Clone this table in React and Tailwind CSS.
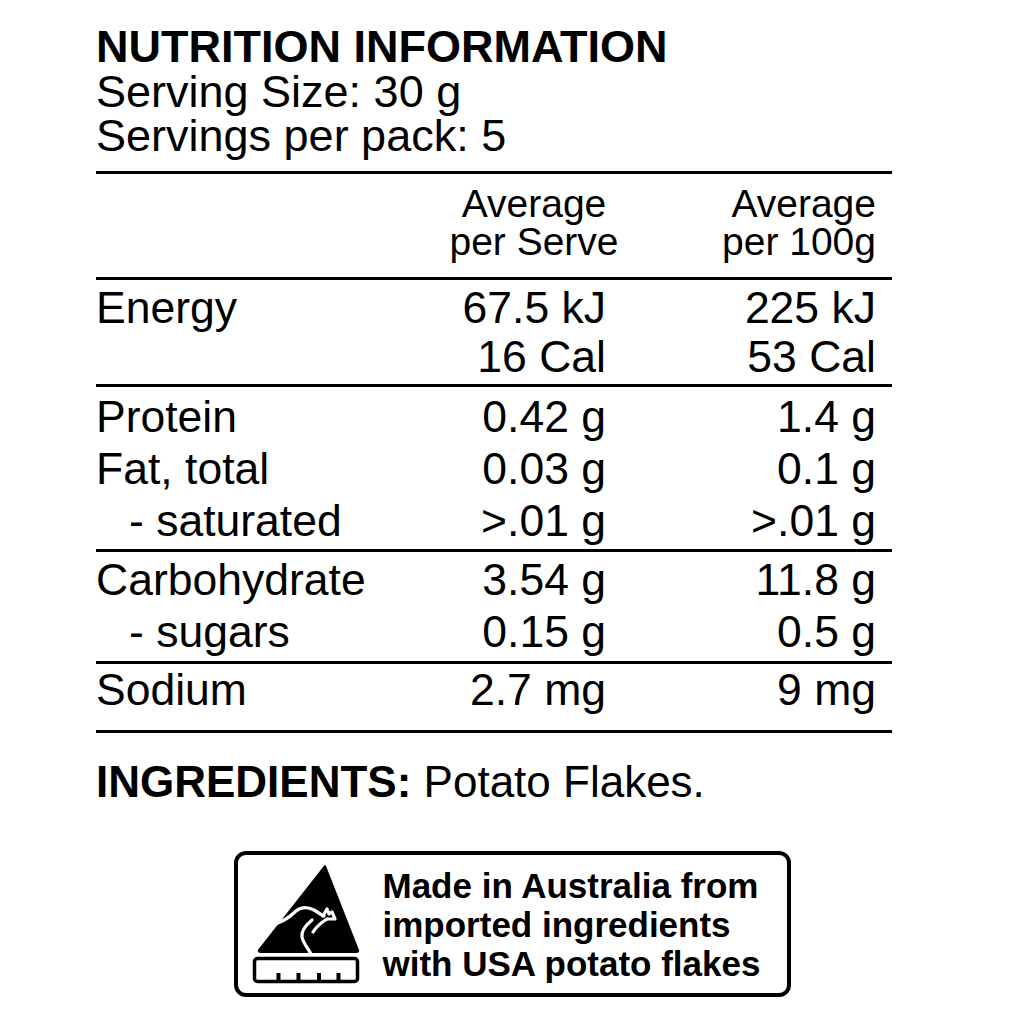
import React from "react";

const rows = [
  [
    { label: "Protein", serve: "0.42 g", per100: "1.4 g" },
    { label: "Fat, total", serve: "0.03 g", per100: "0.1 g" },
    { label: "- saturated", serve: ">.01 g", per100: ">.01 g", sub: true },
  ],
  [
    { label: "Carbohydrate", serve: "3.54 g", per100: "11.8 g" },
    { label: "- sugars", serve: "0.15 g", per100: "0.5 g", sub: true },
  ],
];

function Row({ label, serve, per100, sub }) {
  return (
    <div className="flex h-[52px] leading-[52px]">
      <div className={"w-[304px] " + (sub ? "pl-[33px]" : "")}>{label}</div>
      <div className="w-[206px] text-right">{serve}</div>
      <div className="w-[270px] text-right">{per100}</div>
    </div>
  );
}

function MadeInAustraliaLogo() {
  return (
    <svg width="112" height="125" viewBox="250 860 112 125" className="shrink-0">
      <path
        d="M325 864 L259 948 Q258 950 261 950 L356 950 Q359 950 358 948 Z"
        fill="#000"
        stroke="#000"
        strokeWidth="2"
        strokeLinejoin="round"
      />
      <g fill="none" stroke="#fff" strokeWidth="3.2" strokeLinecap="round" strokeLinejoin="round">
        <path d="M270 923 C282 921 290 915 296 909 C301 905 308 905 314 908 C318 910 321 913 324 914" />
        <path d="M323 914 L327 907 L329 912 L332 910 L335 917 L327 917" />
        <path d="M327 917 C322 920 317 924 313 930" />
        <path d="M312 918 C306 923 301 929 302 935 C303 941 308 946 311 952" />
      </g>
      <rect x="254.5" y="956.5" width="103" height="23" rx="3" fill="none" stroke="#000" strokeWidth="3.5" />
      <g fill="#000">
        <rect x="276.5" y="971" width="4" height="9" />
        <rect x="296.5" y="971" width="4" height="9" />
        <rect x="317" y="971" width="4" height="9" />
        <rect x="336.5" y="971" width="4" height="9" />
      </g>
    </svg>
  );
}

export default function App() {
  return (
    <div className="min-h-screen bg-white text-black font-['Liberation_Sans',Arial,sans-serif]">
      <div className="ml-[96px] w-[796px] pt-[24px] text-[44.5px]">
        <h1 className="text-[45px] font-bold leading-[46px]">NUTRITION INFORMATION</h1>
        <p className="text-[45px] leading-[44px]">Serving Size: 30 g</p>
        <p className="text-[45px] leading-[44px]">Servings per pack: 5</p>

        <div className="mt-[13px] border-t-[3px] border-black pt-[11px] pb-[16px] text-[39px] leading-[38px]">
          <div className="flex">
            <div className="w-[338px]" />
            <div className="w-[200px] text-center">Average<br />per Serve</div>
            <div className="w-[242px] text-right">Average<br />per 100g</div>
          </div>
        </div>

        <div className="border-t-[3px] border-black py-[3px] leading-[49px]">
          <div className="flex">
            <div className="w-[304px]">Energy</div>
            <div className="w-[206px] text-right">67.5 kJ<br />16 Cal</div>
            <div className="w-[270px] text-right">225 kJ<br />53 Cal</div>
          </div>
        </div>

        <div className="border-t-[3px] border-black pt-[4px] pb-[2px]">
          {rows[0].map((r) => (
            <Row key={r.label} {...r} />
          ))}
        </div>

        <div className="border-t-[3px] border-black pt-[2px] pb-[3px]">
          {rows[1].map((r) => (
            <Row key={r.label} {...r} />
          ))}
        </div>

        <div className="border-t-[3px] border-black pb-[14px]">
          <Row label="Sodium" serve="2.7 mg" per100="9 mg" />
        </div>

        <div className="border-t-[3px] border-black" />

        <p className="mt-[23px] text-[44px] leading-[52px]">
          <span className="font-bold">INGREDIENTS:</span> Potato Flakes.
        </p>
      </div>

      <div className="mx-auto mt-[43px] flex h-[146px] w-[557px] items-center rounded-[12px] border-[4px] border-black">
        <div className="ml-[12px]">
          <MadeInAustraliaLogo />
        </div>
        <div className="ml-[21px] text-[35px] font-bold leading-[39px]">
          <p>Made in Australia from</p>
          <p>imported ingredients</p>
          <p>with USA potato flakes</p>
        </div>
      </div>
    </div>
  );
}
